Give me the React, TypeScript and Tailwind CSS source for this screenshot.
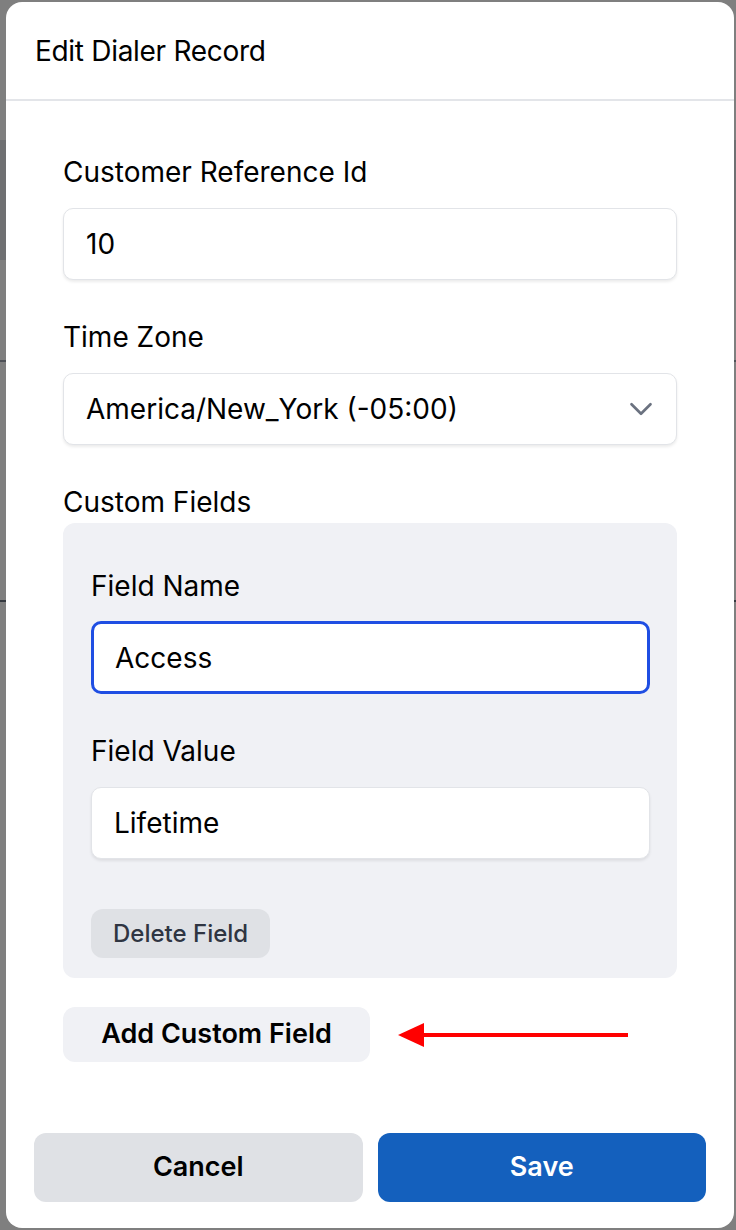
import React from 'react';
import { ChevronDown } from 'lucide-react';

const font = { fontFamily: 'Inter, "Noto Sans", sans-serif' };

const Label: React.FC<{ children: React.ReactNode; className?: string }> = ({ children, className = '' }) => (
    <div className={`text-[28px] leading-8 text-black ${className}`}>{children}</div>
);

const TextBox: React.FC<{ value: string; focused?: boolean }> = ({ value, focused }) => (
    <div
        className={
            focused
                ? 'h-[73px] rounded-[10px] border-[3px] border-[#1f4ee3] bg-white px-[21px] flex items-center text-[28px] text-black'
                : 'h-[72px] rounded-[10px] border border-[#e2e4e8] bg-white px-[22px] flex items-center text-[28px] text-black shadow-[0_2px_3px_rgba(0,0,0,0.08)]'
        }
    >
        {value}
    </div>
);

const Arrow: React.FC = () => (
    <svg width="232" height="26" viewBox="0 0 232 26" className="ml-[28px]">
        <line x1="22" y1="13" x2="230" y2="13" stroke="#ff0000" strokeWidth="4" />
        <polygon points="0,13 26,1 26,25" fill="#ff0000" />
    </svg>
);

const App: React.FC = () => {
    return (
        <div className="relative min-h-screen bg-white overflow-hidden" style={font}>
            {/* page behind the dialog */}
            <div className="flex flex-col">
                <div className="h-[140px] px-2 pt-4 text-[32px] text-black">C</div>
                <div className="h-[120px] bg-[#dfe1e5] px-2 pt-4">
                    <div className="h-[26px] w-[40px] bg-[#111827]"></div>
                    <div className="mt-3 text-[24px] text-[#374151]">n</div>
                </div>
                <div className="h-[102px] border-b-2 border-[#9ca3af] bg-white px-2 pt-8 text-[24px] text-[#111827]">n</div>
                <div className="h-[240px] bg-white border-b-2 border-[#6b7280]"></div>
            </div>

            {/* overlay */}
            <div className="absolute inset-0 bg-black/50 flex justify-start items-start pt-[2px] pl-[6px]">
                <div className="w-[728px] bg-white rounded-[16px] flex flex-col">
                    <div className="h-[99px] flex items-center px-[29px] border-b-2 border-[#e3e5e9]">
                        <h2 className="text-[28px] text-black tracking-[-0.3px]">Edit Dialer Record</h2>
                    </div>

                    <div className="px-[57px] pt-[55px]">
                        <Label className="mb-[20px]">Customer Reference Id</Label>
                        <TextBox value="10" />

                        <Label className="mt-[41px] mb-[20px]">Time Zone</Label>
                        <div className="h-[72px] rounded-[10px] border border-[#e2e4e8] bg-white pl-[22px] pr-[16px] flex items-center justify-between text-[28px] text-black shadow-[0_2px_3px_rgba(0,0,0,0.08)]">
                            <span>America/New_York (-05:00)</span>
                            <ChevronDown size={38} strokeWidth={1.7} className="text-[#6b7280]" />
                        </div>

                        <Label className="mt-[41px] mb-[5px]">Custom Fields</Label>
                        <div className="rounded-[12px] bg-[#f0f1f5] pl-[28px] pr-[27px] pt-[47px] pb-[20px]">
                            <Label className="mb-[19px]">Field Name</Label>
                            <TextBox value="Access" focused />
                            <Label className="mt-[41px] mb-[20px]">Field Value</Label>
                            <TextBox value="Lifetime" />
                            <button className="mt-[50px] h-[49px] px-[22px] rounded-[12px] bg-[#dfe1e5] text-[24px] font-medium text-[#2f3542]">
                                Delete Field
                            </button>
                        </div>

                        <div className="mt-[29px] flex items-center">
                            <button className="h-[55px] w-[307px] rounded-[12px] bg-[#f0f1f5] text-[27px] font-semibold text-black">
                                Add Custom Field
                            </button>
                            <Arrow />
                        </div>
                    </div>

                    <div className="flex gap-[15px] px-[28px] pt-[71px] pb-[26px]">
                        <button className="flex-1 h-[69px] rounded-[12px] bg-[#dfe1e5] text-[27px] font-semibold text-black">
                            Cancel
                        </button>
                        <button className="flex-1 h-[69px] rounded-[12px] bg-[#1460bd] text-[27px] font-semibold text-white">
                            Save
                        </button>
                    </div>
                </div>
            </div>
        </div>
    );
};

export default App;
